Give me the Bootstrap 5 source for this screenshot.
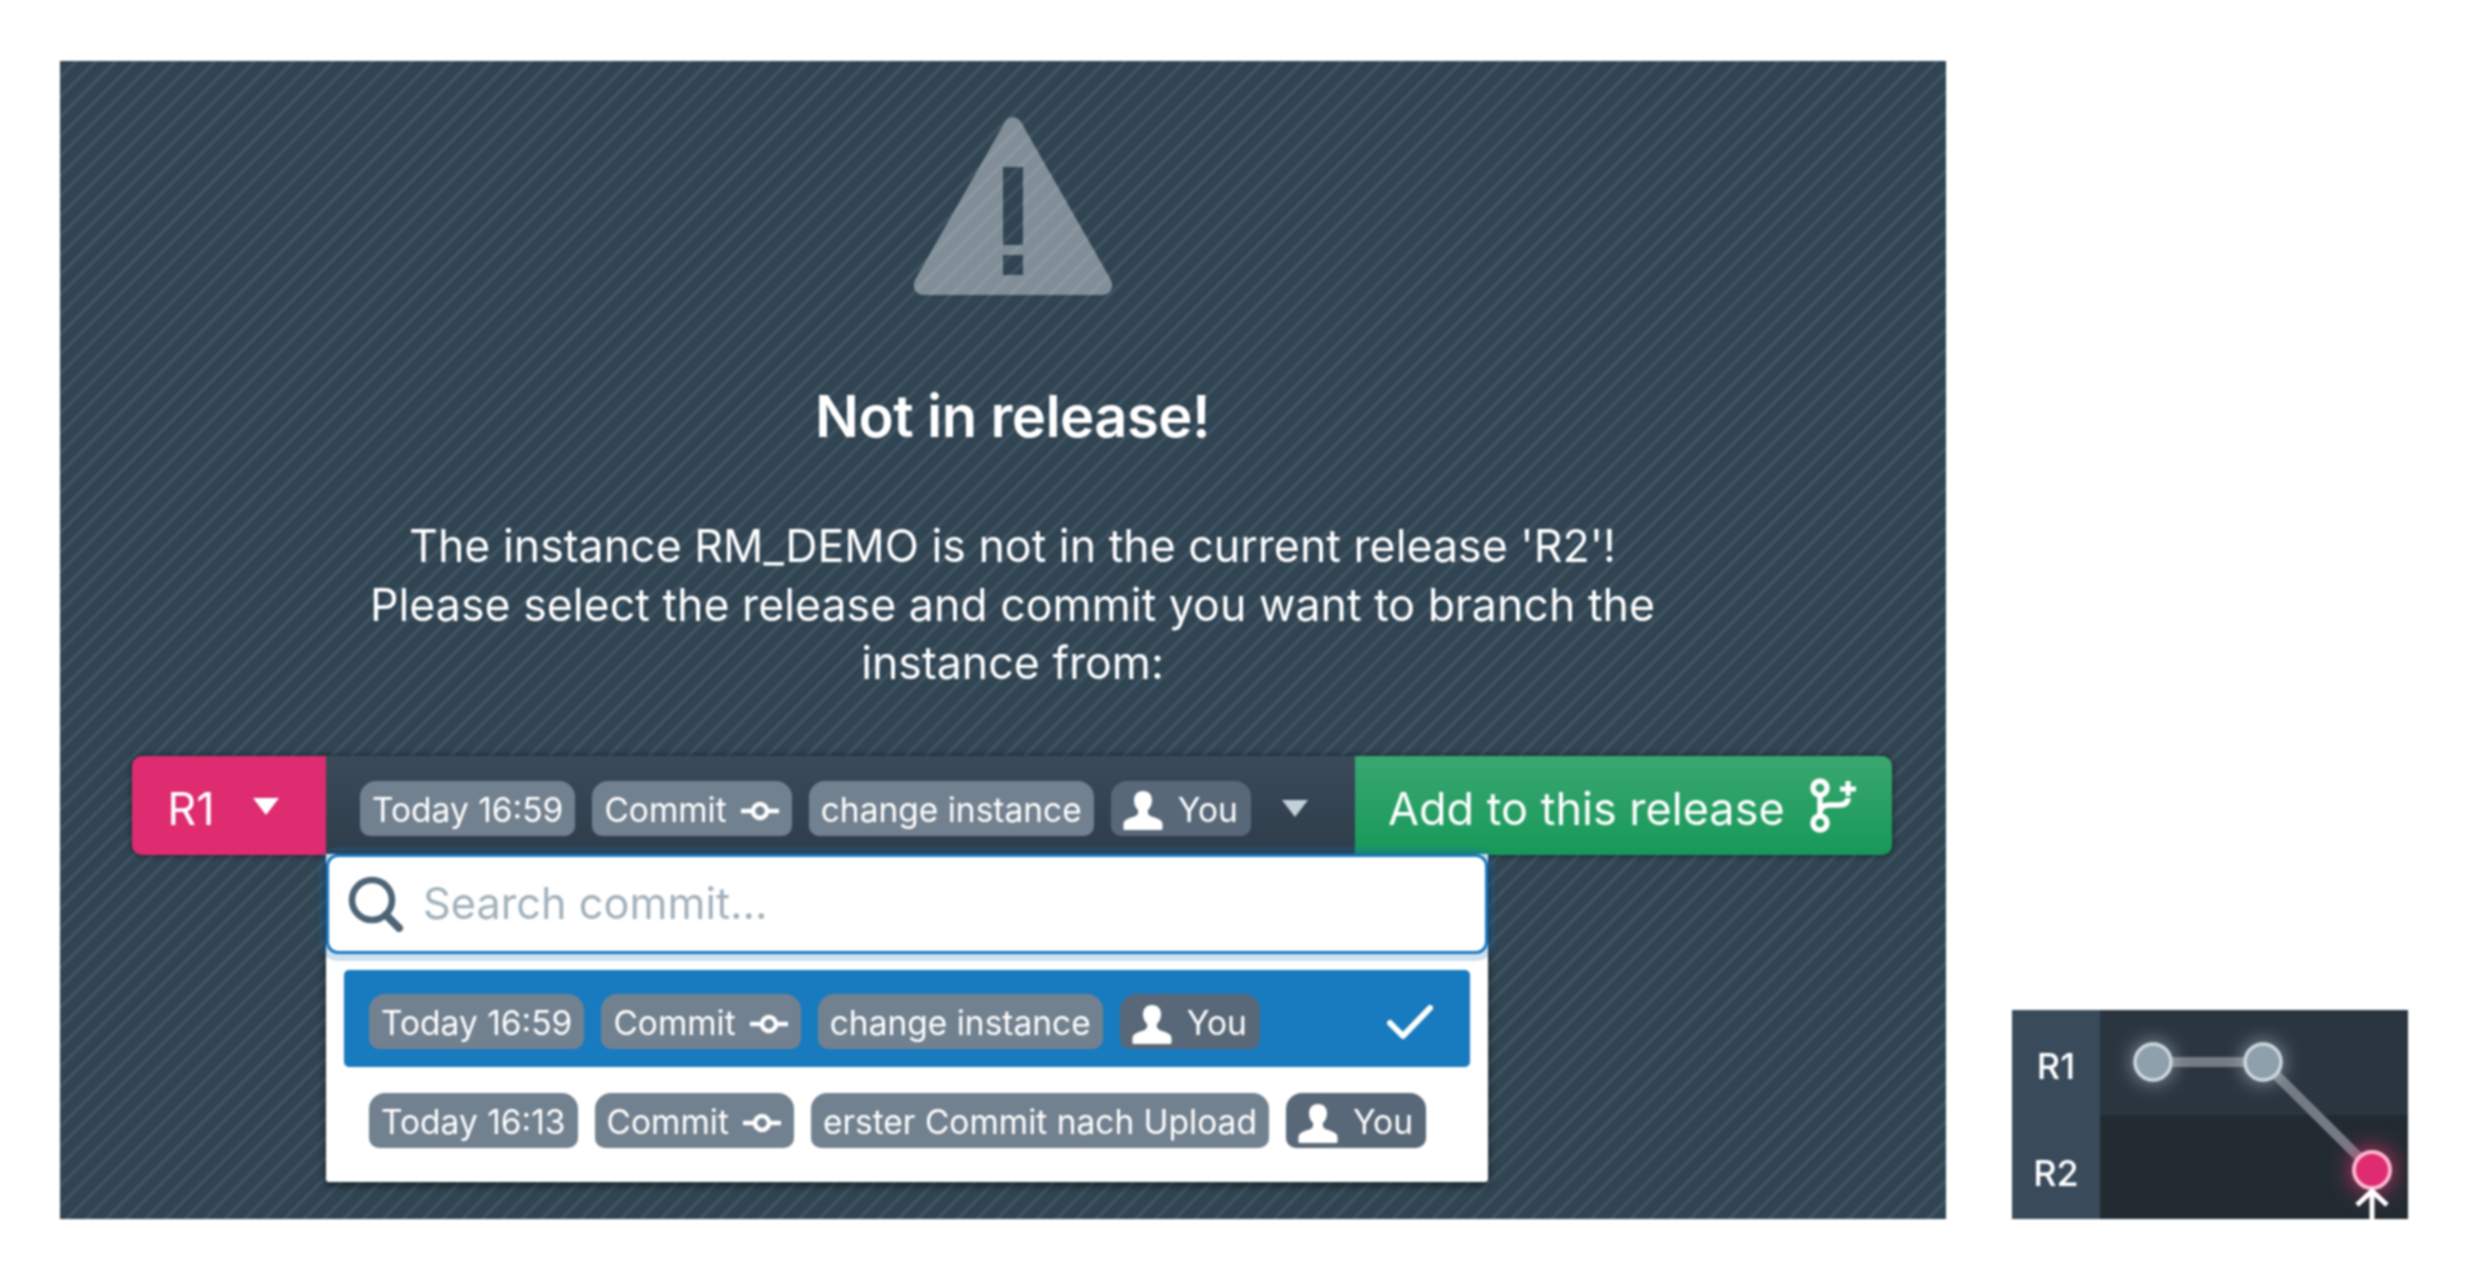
<!doctype html>
<html lang="en">
<head>
<meta charset="utf-8">
<title>Not in release</title>
<link href="https://cdn.jsdelivr.net/npm/bootstrap@5.3.0/dist/css/bootstrap.min.css" rel="stylesheet">
<style>
html,body{height:100%}
body{background:#fff;font-family:Inter,"Liberation Sans",sans-serif;padding:61px 0 0 60px;overflow:hidden;margin:0}
.scene{gap:66px;filter:blur(.8px)}
.panel-main{width:1886px;height:1158px;color:#fff;padding:56px 0 0 19px;
  background:repeating-linear-gradient(135deg,#304452 0,#304452 9px,#415564 11px,#415564 12px,#304452 14px)}
.warn-icon{width:200px;height:180px;display:block}
.title-text{font-size:58px;font-weight:600;line-height:64px;margin:87px 0 0;letter-spacing:-.6px}
.body-text{font-size:44.7px;line-height:58.5px;margin:69px 0 0;width:1340px;text-align:center}
.ctl{width:1760px;height:99px;margin:63.5px 0 0 -1px;position:relative;box-shadow:0 0 6px rgba(0,0,0,.55);border-radius:10px}
.btn-rel{background:#df2b70;color:#fff;font-size:45px;font-weight:400;width:194px;border:0;border-radius:10px 0 0 10px;padding:0 10px 0 0;gap:36px}
.btn-label{padding-top:6px}
.commit-bar{flex:1 1 auto;background:linear-gradient(#3a4a59,#2e3d4a);padding:5px 0 0 34px;gap:17px}
.btn-add{width:537px;border:0;border-radius:0 10px 10px 0;color:#fff;font-size:45px;font-weight:400;padding:0 0 0 33px;gap:24px;
  background:linear-gradient(#3aa771,#17995a);justify-content:flex-start}
.chip{display:inline-flex;align-items:center;height:55px;padding:5px 12px 0;font-size:33.5px;font-weight:400;color:#fff;background:#72818f;
  border-radius:16px 16px 10px 10px;white-space:nowrap;gap:13px;line-height:1}
.chip-you{background:#596878;gap:15px;padding:5px 13px 0 12px}
.ddm{left:194px;top:97.500px;width:1162px;height:328.500px;background:#fff;border:0;border-radius:0 0 3px 3px;padding:0;box-shadow:0 3px 8px rgba(0,0,0,.55);margin:0}
.search-box{height:100px;border:3px solid #1a78bf;border-radius:12px;box-shadow:0 0 0 7px rgba(26,120,191,.22);padding-left:19px;gap:19px;background:#fff}
.search-box .form-control{border:0;box-shadow:none;font-size:43.3px;padding:0;color:#333}
.search-box .form-control::placeholder{color:#a3b1bb}
.item-row{margin:16.500px 18px 0;width:auto;height:97px;padding:0 0 0 25px;gap:17px;border-radius:5px;background:transparent}
.item-row.active{background:#187abf;padding-top:6px}
.item-row+.item-row{margin-top:5px}
.caret-i{margin-left:12px}
.check{margin-left:auto;margin-right:36px}
.panel-graph{width:396px;height:209px;position:relative;color:#fff;font-weight:500;font-size:36px}
.lbl-col{width:88px;background:#394b5b}
.lbl-cell{height:50%;width:100%}
.lbl-r1{padding-top:8px}
.lbl-r2{padding-top:13px}
.plot-col{flex:1 1 auto;box-shadow:inset 10px 0 10px -6px rgba(0,0,0,.22)}
.plot-top{height:105px;background:#2a3540}
.plot-bot{height:104px;background:#222b32}
.graph-svg{position:absolute;left:88px;top:0;width:308px;height:209px;overflow:hidden}
.n-grey{filter:drop-shadow(0 0 10px rgba(200,215,225,.65))}
.n-pink{filter:drop-shadow(0 0 12px rgba(240,50,110,.9))}
</style>
</head>
<body>
<div class="scene d-flex align-items-end">
  <section class="panel-main d-flex flex-column align-items-center">
    <svg class="warn-icon" viewBox="0 0 200 180" aria-hidden="true"><path fill="#fff" fill-opacity=".4" fill-rule="evenodd" d="M92 5c4-6.500 12-6.500 16 0l90 158c3 7 0 15-9 15H11c-9 0-12-8-9-15zM90 50v78h20V50zM90 138v20h20v-20z" stroke="none"/></svg>
    <h1 class="title-text">Not in release!</h1>
    <p class="body-text">The instance RM_DEMO is not in the current release 'R2'!<br>Please select the release and commit you want to branch the instance from:</p>
    <div class="ctl d-flex">
      <button class="btn btn-rel d-flex align-items-center justify-content-center" type="button"><span class="btn-label">R1</span>
        <svg width="30" height="20" viewBox="0 0 30 20"><path fill="#fff" d="M2 2h26L15 19z"/></svg>
      </button>
      <div class="commit-bar d-flex align-items-center">
        <span class="chip">Today 16:59</span>
        <span class="chip">Commit <svg width="40" height="30" viewBox="0 0 40 30"><circle cx="20" cy="15" r="7" fill="none" stroke="#fff" stroke-width="4.500"/><path d="M1 15h11M28 15h11" stroke="#fff" stroke-width="4.500"/></svg></span>
        <span class="chip">change instance</span>
        <span class="chip chip-you"><svg width="40" height="41" viewBox="0 0 40 46" preserveAspectRatio="none"><path fill="#fff" d="M20 1c-6 0-9 4.500-9 10.500 0 4.500 1.500 8 4 11 .5 2.500 0 5-2 6.500-4 2-10 3-12 7-1 2-.5 9 0 9h38c.5 0 1-7 0-9-2-4-8-5-12-7-2-1.500-2.500-4-2-6.500 2.500-3 4-6.500 4-11C29 5.500 26 1 20 1z"/></svg>You</span>
        <svg class="caret-i" width="30" height="20" viewBox="0 0 30 20"><path fill="#c3d0da" d="M2 2h26L15 19z"/></svg>
      </div>
      <button class="btn btn-add d-flex align-items-center" type="button"><span class="btn-label">Add to this release</span>
        <svg width="50" height="56" viewBox="0 0 50 56" fill="none" stroke="#fff" stroke-width="5.500"><circle cx="11" cy="10" r="7"/><circle cx="11" cy="45" r="7"/><path d="M11 17v21M11 35c0-6 4-8 10-8h8c6 0 10-2 10-7"/><path d="M39 3v15M31 11h16" stroke-width="5"/></svg>
      </button>
      <div class="dropdown-menu show ddm">
        <div class="search-box d-flex align-items-center">
          <svg width="56" height="56" viewBox="0 0 56 56" fill="none" stroke="#4d6477" stroke-width="6.500" class="flex-shrink-0"><circle cx="24" cy="24" r="20"/><path d="M38 39l13 13" stroke-linecap="round" stroke-width="8"/></svg>
          <input class="form-control" type="text" placeholder="Search commit...">
        </div>
        <a class="dropdown-item active item-row d-flex align-items-center" href="#">
          <span class="chip">Today 16:59</span>
          <span class="chip">Commit <svg width="40" height="30" viewBox="0 0 40 30"><circle cx="20" cy="15" r="7" fill="none" stroke="#fff" stroke-width="4.500"/><path d="M1 15h11M28 15h11" stroke="#fff" stroke-width="4.500"/></svg></span>
          <span class="chip">change instance</span>
          <span class="chip chip-you"><svg width="40" height="41" viewBox="0 0 40 46" preserveAspectRatio="none"><path fill="#fff" d="M20 1c-6 0-9 4.500-9 10.500 0 4.500 1.500 8 4 11 .5 2.500 0 5-2 6.500-4 2-10 3-12 7-1 2-.5 9 0 9h38c.5 0 1-7 0-9-2-4-8-5-12-7-2-1.500-2.500-4-2-6.500 2.500-3 4-6.500 4-11C29 5.500 26 1 20 1z"/></svg>You</span>
          <svg class="check" width="48" height="36" viewBox="0 0 48 36" fill="none" stroke="#fff" stroke-width="6" stroke-linecap="round" stroke-linejoin="round"><path d="M4 19l13 13L44 4"/></svg>
        </a>
        <a class="dropdown-item item-row d-flex align-items-center" href="#">
          <span class="chip">Today 16:13</span>
          <span class="chip">Commit <svg width="40" height="30" viewBox="0 0 40 30"><circle cx="20" cy="15" r="7" fill="none" stroke="#fff" stroke-width="4.500"/><path d="M1 15h11M28 15h11" stroke="#fff" stroke-width="4.500"/></svg></span>
          <span class="chip">erster Commit nach Upload</span>
          <span class="chip chip-you"><svg width="40" height="41" viewBox="0 0 40 46" preserveAspectRatio="none"><path fill="#fff" d="M20 1c-6 0-9 4.500-9 10.500 0 4.500 1.500 8 4 11 .5 2.500 0 5-2 6.500-4 2-10 3-12 7-1 2-.5 9 0 9h38c.5 0 1-7 0-9-2-4-8-5-12-7-2-1.500-2.500-4-2-6.500 2.500-3 4-6.500 4-11C29 5.500 26 1 20 1z"/></svg>You</span>
        </a>
      </div>
    </div>
  </section>
  <section class="panel-graph d-flex">
    <div class="lbl-col d-flex flex-column">
      <div class="lbl-cell lbl-r1 d-flex align-items-center justify-content-center">R1</div>
      <div class="lbl-cell lbl-r2 d-flex align-items-center justify-content-center">R2</div>
    </div>
    <div class="plot-col d-flex flex-column">
      <div class="plot-top"></div>
      <div class="plot-bot"></div>
    </div>
    <svg class="graph-svg" viewBox="0 0 308 209" fill="none">
      <path d="M53 52H163L272 160" stroke="#757b85" stroke-width="10"/>
      <circle class="n-grey" cx="53" cy="52" r="18" fill="#8fa0ad" stroke="#cdd7de" stroke-width="3.500"/>
      <circle class="n-grey" cx="163" cy="52" r="18" fill="#8fa0ad" stroke="#cdd7de" stroke-width="3.500"/>
      <circle class="n-pink" cx="272" cy="160" r="18" fill="#df2b70" stroke="#f9b6cd" stroke-width="4"/>
      <path d="M272 209V182M257 195l15-14 15 14" stroke="#fff" stroke-width="5"/>
    </svg>
  </section>
</div>
<script src="https://cdn.jsdelivr.net/npm/bootstrap@5.3.0/dist/js/bootstrap.bundle.min.js"></script>
</body>
</html>
